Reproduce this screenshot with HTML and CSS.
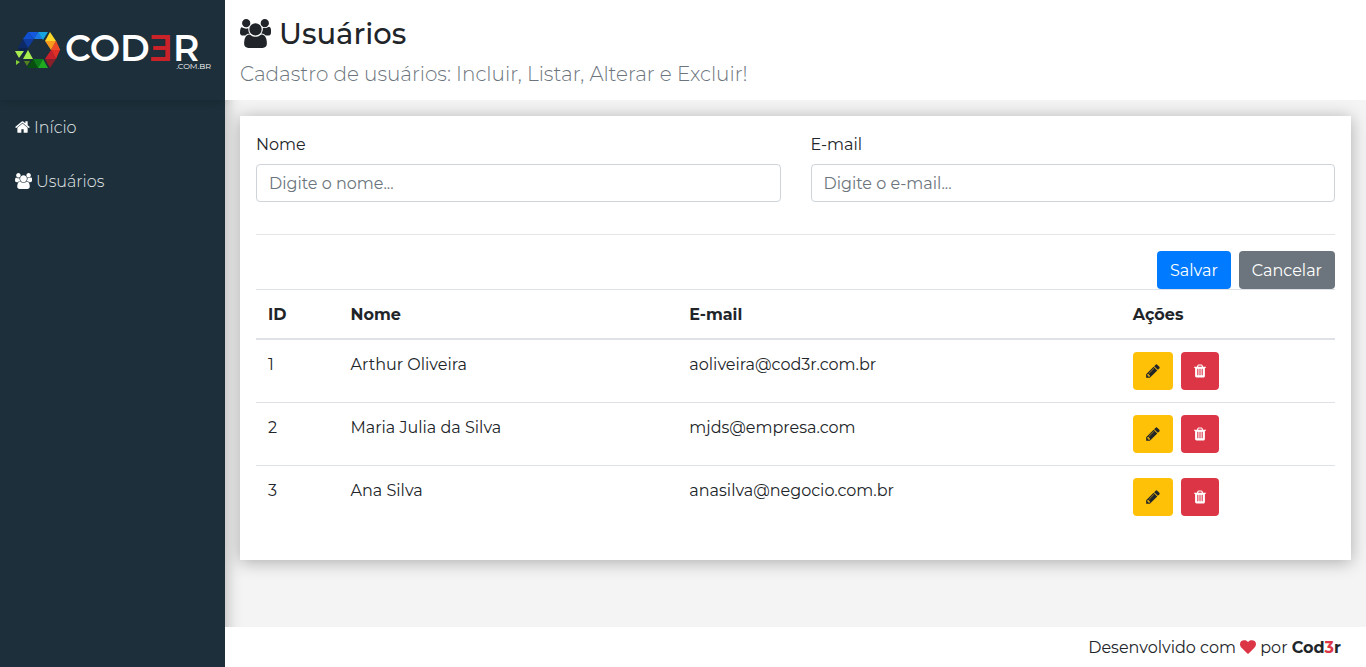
FILE: index.html
```html
<!DOCTYPE html>
<html lang="pt-BR">
<head>
<meta charset="utf-8">
<meta name="viewport" content="width=device-width, initial-scale=1">
<title>Usuários</title>
<link rel="stylesheet" href="styles.css">
</head>
<body>
<svg class="sprite" aria-hidden="true">
  <symbol id="home" viewBox="64 0 1664 1792"><path d="M1472 992v480q0 26-19 45t-45 19h-384v-384h-256v384h-384q-26 0-45-19t-19-45v-480q0-1 .5-3t.5-3l575-474 575 474q1 2 1 6zm223-69l-62 74q-8 9-21 11h-3q-13 0-21-7l-692-577-692 577q-12 8-24 7-13-2-21-11l-62-74q-8-10-7-23.500t11-21.500l719-599q32-26 76-26t76 26l244 204v-195q0-14 9-23t23-9h192q14 0 23 9t9 23v408l219 182q10 8 11 21.500t-7 23.500z"/></symbol>
  <symbol id="users" viewBox="-64 0 1920 1792"><path d="M529 896q-162 5-265 128h-134q-82 0-138-40.500t-56-118.500q0-353 124-353 6 0 43.500 21t97.500 42.500 119 21.500q67 0 133-23-5 37-5 66 0 159 92 294zm1071 637q0 120-73 189.500t-194 69.500h-874q-121 0-194-69.500t-73-189.500q0-53 3.500-103.500t14-109 26.500-108.500 43-97.500 62-81 85.500-53.500 111.500-20q10 0 43 21.500t73 48 107 48 135 21.500 135-21.500 107-48 73-48 43-21.500q61 0 111.500 20t85.500 53.500 62 81 43 97.500 26.500 108.500 14 109 3.500 103.500zm-1024-1277q0 106-75 181t-181 75-181-75-75-181 75-181 181-75 181 75 75 181zm704 384q0 159-112.500 271.500t-271.500 112.500-271.500-112.500-112.500-271.500 112.500-271.500 271.500-112.500 271.500 112.500 112.500 271.500zm576 225q0 78-56 118.500t-138 40.500h-134q-103-123-265-128 92-135 92-294 0-29-5-66 66 23 133 23 59 0 119-21.500t97.500-42.500 43.500-21q124 0 124 353zm-128-609q0 106-75 181t-181 75-181-75-75-181 75-181 181-75 181 75 75 181z"/></symbol>
  <symbol id="pencil" viewBox="128 0 1536 1792"><path d="M491 1536l91-91-235-235-91 91v107h128v128h107zm523-928q0-22-22-22-10 0-17 7l-542 542q-7 7-7 17 0 22 22 22 10 0 17-7l542-542q7-7 7-17zm-54-192l416 416-832 832h-416v-416zm683 96q0 53-37 90l-166 166-416-416 166-165q36-38 90-38 53 0 91 38l235 234q37 39 37 91z"/></symbol>
  <symbol id="trash" viewBox="192 0 1408 1792"><path d="M704 1376v-704q0-14-9-23t-23-9h-64q-14 0-23 9t-9 23v704q0 14 9 23t23 9h64q14 0 23-9t9-23zm256 0v-704q0-14-9-23t-23-9h-64q-14 0-23 9t-9 23v704q0 14 9 23t23 9h64q14 0 23-9t9-23zm256 0v-704q0-14-9-23t-23-9h-64q-14 0-23 9t-9 23v704q0 14 9 23t23 9h64q14 0 23-9t9-23zm-544-992h448l-48-117q-7-9-17-11h-317q-10 2-17 11zm928 32v64q0 14-9 23t-23 9h-96v948q0 83-47 143.500t-113 60.500h-832q-66 0-113-58.500t-47-141.500v-952h-96q-14 0-23-9t-9-23v-64q0-14 9-23t23-9h309l70-167q15-37 54-63t79-26h320q40 0 79 26t54 63l70 167h309q14 0 23 9t9 23z"/></symbol>
  <symbol id="heart" viewBox="0 0 1792 1792"><path d="M896 1664q-26 0-44-18l-624-602q-10-8-27.500-26t-55.500-65.500-68-97.500-53.500-121-23.500-138q0-220 127-344t351-124q62 0 126.500 21.500t120 58 95.500 68.500 76 68q36-36 76-68t95.500-68.500 120-58 126.500-21.500q224 0 351 124t127 344q0 221-229 450l-623 600q-18 18-44 18z"/></symbol>
</svg>
<div class="app">
  <aside class="sidebar">
    <a class="logo" href="#" aria-label="Cod3r">
      <svg viewBox="0 0 196 38" role="img" aria-label="COD3R.COM.BR">
        <path fill="#0d2a66" d="M3 17h10L8 8z"/>
        <path fill="#103c9e" d="M8 8h11l-6 9z"/>
        <path fill="#0f4fd0" d="M8 8l5-7 6 7z"/>
        <path fill="#1459df" d="M13 1h10l-4 7z"/>
        <path fill="#1a78e6" d="M19 8l4-7 5 7z"/>
        <path fill="#16a3e0" d="M23 1h10l-5 8z"/>
        <path fill="#0c2350" d="M3 17h10l-5 8z"/>
        <path fill="#fbd72b" d="M35 1l6 9H30z"/>
        <path fill="#f79a1e" d="M30 10h11l-5 9z"/>
        <path fill="#fb7f25" d="M41 10l4 9h-9z"/>
        <path fill="#ec4a26" d="M36 19h9l-4-9z"/>
        <path fill="#e02f27" d="M36 19h9l-4 9z"/>
        <path fill="#c8202a" d="M36 19l5 9H30z"/>
        <path fill="#86202a" d="M30 28h11l-6 9z"/>
        <path fill="#a8ed50" d="M0 20h9l-5 7zM13 19l5 9H8z"/>
        <path fill="#82cf38" d="M1 29l4 2-4 3z"/>
        <path fill="#53851f" d="M9 30h6l-3 5z"/>
        <path fill="#07500f" d="M18 28l5 9H12z"/>
        <path fill="#0c7a16" d="M18 28h10l-5 9z"/>
        <path fill="#20aa20" d="M28 28l5 9H23z"/>
        <text class="wordmark" x="50" y="30">COD<tspan class="red">Ǝ</tspan>R</text>
        <text class="domain" x="196" y="38" text-anchor="end">.COM.BR</text>
      </svg>
    </a>
    <nav class="menu">
      <a href="#"><svg class="icon home"><use href="#home"/></svg>Início</a>
      <a href="#"><svg class="icon users"><use href="#users"/></svg>Usuários</a>
    </nav>
  </aside>
  <header class="header">
    <h1><svg class="title-icon"><use href="#users"/></svg>Usuários</h1>
    <p>Cadastro de usuários: Incluir, Listar, Alterar e Excluir!</p>
  </header>
  <main class="content">
    <div class="card">
      <form>
        <div class="fields">
          <div class="field">
            <label for="name">Nome</label>
            <input id="name" type="text" placeholder="Digite o nome...">
          </div>
          <div class="field">
            <label for="email">E-mail</label>
            <input id="email" type="text" placeholder="Digite o e-mail...">
          </div>
        </div>
        <hr>
        <div class="actions">
          <button class="btn primary" type="button">Salvar</button>
          <button class="btn secondary" type="button">Cancelar</button>
        </div>
      </form>
      <table>
        <colgroup><col class="c-id"><col class="c-name"><col class="c-email"><col></colgroup>
        <thead><tr><th>ID</th><th>Nome</th><th>E-mail</th><th>Ações</th></tr></thead>
        <tbody>
          <tr><td>1</td><td>Arthur Oliveira</td><td>aoliveira@cod3r.com.br</td><td><div class="row-actions"><button class="btn warning" type="button" aria-label="Editar"><svg class="icon pencil"><use href="#pencil"/></svg></button><button class="btn danger" type="button" aria-label="Excluir"><svg class="icon trash"><use href="#trash"/></svg></button></div></td></tr>
          <tr><td>2</td><td>Maria Julia da Silva</td><td>mjds@empresa.com</td><td><div class="row-actions"><button class="btn warning" type="button" aria-label="Editar"><svg class="icon pencil"><use href="#pencil"/></svg></button><button class="btn danger" type="button" aria-label="Excluir"><svg class="icon trash"><use href="#trash"/></svg></button></div></td></tr>
          <tr><td>3</td><td>Ana Silva</td><td>anasilva@negocio.com.br</td><td><div class="row-actions"><button class="btn warning" type="button" aria-label="Editar"><svg class="icon pencil"><use href="#pencil"/></svg></button><button class="btn danger" type="button" aria-label="Excluir"><svg class="icon trash"><use href="#trash"/></svg></button></div></td></tr>
        </tbody>
      </table>
    </div>
  </main>
  <footer class="footer">
    <span>Desenvolvido com <svg class="icon heart"><use href="#heart"/></svg> por <strong>Cod<span class="red">3</span>r</strong></span>
  </footer>
</div>
</body>
</html>
```
FILE: styles.css
```css
* { box-sizing: border-box; }
body {
  margin: 0;
  font-family: Montserrat, Inter, "Open Sans", sans-serif;
  font-size: 16px;
  font-weight: 400;
  line-height: 24px;
  color: #212529;
}
.sprite { display: none; }
svg { fill: currentColor; }
.app {
  display: grid;
  grid-template-columns: 225px 1fr;
  grid-template-rows: 100px 1fr 40px;
  grid-template-areas: "side header" "side content" "side footer";
  min-height: 100vh;
  background: #f4f4f4;
}
.sidebar {
  grid-area: side;
  position: relative;
  background: #1c2f3a;
  box-shadow: 0 2px 16px rgba(0, 0, 0, .3);
}
.logo {
  display: flex;
  align-items: center;
  height: 100px;
  padding: 0 14px 0 15px;
  box-shadow: 0 0 10px rgba(0, 0, 0, .2);
}
.logo svg { width: 100%; overflow: visible; }
.wordmark { font: 600 36px Montserrat, "DejaVu Sans", sans-serif; fill: #fff; }
.wordmark .red { fill: #c92228; }
.domain { font: 400 8px Montserrat, "DejaVu Sans", sans-serif; fill: #fff; }
.menu { display: flex; flex-direction: column; font-weight: 300; }
.menu a {
  display: flex;
  align-items: center;
  gap: 4px;
  height: 54px;
  padding: 2px 15px 0;
  color: #e4e8ea;
  text-decoration: none;
}
.icon { height: 16px; color: inherit; }
.menu .icon { margin-bottom: 2px; color: #fff; }
.home { width: 15px; }
.users { width: 17px; }
.pencil { width: 14px; }
.trash { width: 12px; }
.header {
  grid-area: header;
  position: relative;
  padding: 16px 15px 0;
  background: #fff;
}
.header h1 {
  display: flex;
  align-items: center;
  gap: 8px;
  margin: 0;
  font-size: 29px;
  font-weight: 500;
  line-height: 35px;
}
.title-icon { width: 31px; height: 29px; }
.header p {
  margin: 8px 0 0;
  font-size: 20px;
  font-weight: 300;
  line-height: 30px;
  color: #6c757d;
}
.content { grid-area: content; padding: 16px 15px; }
.card {
  position: relative;
  padding: 16px 16px 32px;
  background: #fff;
  box-shadow: 0 2px 16px rgba(0, 0, 0, .3);
}
.fields { display: grid; grid-template-columns: 1fr 1fr; gap: 30px; }
.field label { display: block; margin-bottom: 6px; line-height: 26px; }
.field input {
  display: block;
  width: 100%;
  height: 38px;
  padding: 6px 12px;
  border: 1px solid #ced4da;
  border-radius: 4px;
  font: inherit;
  background: #fff;
  color: #495057;
}
.field input::placeholder { color: #6c757d; opacity: 1; }
hr { margin: 32px 0 16px; border: 0; border-top: 1px solid rgba(0, 0, 0, .1); }
.actions { display: flex; justify-content: flex-end; gap: 8px; }
.btn {
  display: flex;
  align-items: center;
  justify-content: center;
  height: 38px;
  padding: 0 12px;
  border: 1px solid transparent;
  border-radius: 4px;
  font: inherit;
  color: #fff;
}
.actions .btn { padding-top: 2px; }
.primary { background: #007bff; }
.secondary { background: #6c757d; }
.warning { background: #ffc107; color: #212529; }
.danger { background: #dc3545; }
table { width: 100%; table-layout: fixed; border-collapse: collapse; line-height: 26px; }
.c-id { width: 7.65%; }
.c-name { width: 31.4%; }
.c-email { width: 41.1%; }
th, td {
  padding: 12px;
  border-top: 1px solid #dee2e6;
  text-align: left;
  vertical-align: top;
}
th { padding-bottom: 10px; border-bottom: 2px solid #dee2e6; font-weight: 700; }
.row-actions { display: flex; gap: 8px; }
.footer {
  grid-area: footer;
  position: relative;
  display: flex;
  align-items: center;
  justify-content: flex-end;
  padding: 2px 25px 0;
  background: #fff;
}
.heart { width: 16px; vertical-align: -2px; color: #dc3545; }
.footer strong { font-weight: 700; }
.red { color: #dc3545; }
```
